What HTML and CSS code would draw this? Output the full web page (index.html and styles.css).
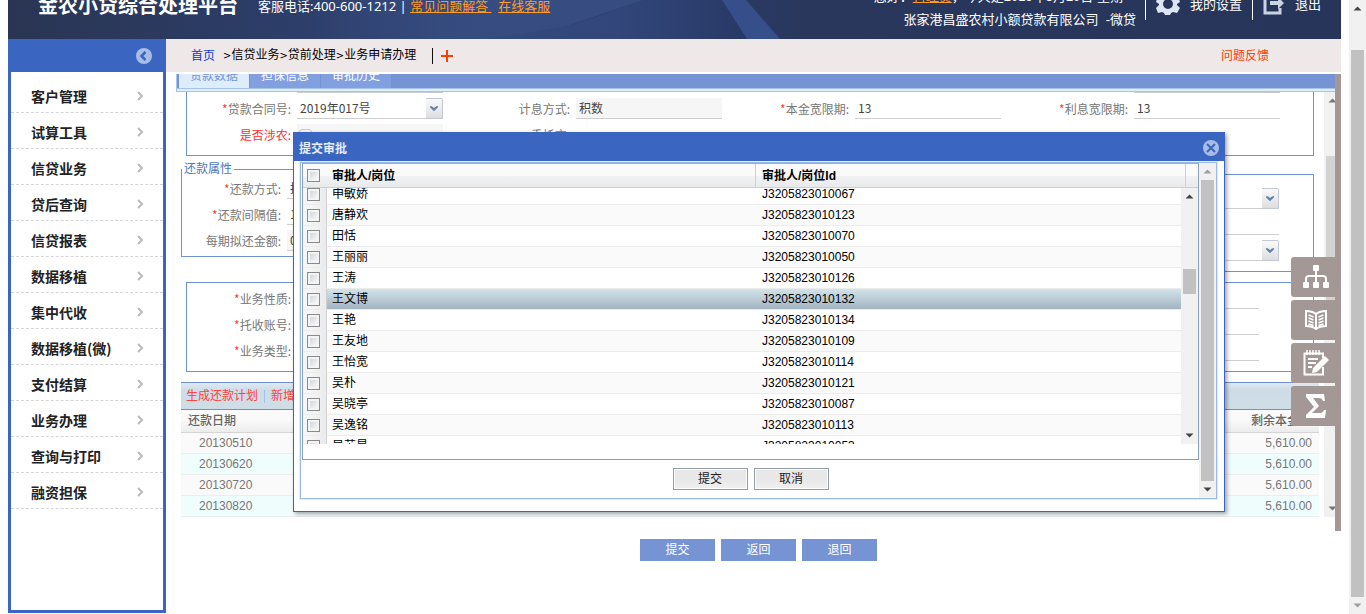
FILE: index.html
```html
<!DOCTYPE html>
<html lang="zh-CN">
<head>
<meta charset="utf-8">
<title>金农小贷综合处理平台</title>
<link rel="stylesheet" href="styles.css">
</head>
<body>
<svg class="defs" aria-hidden="true">
  <symbol id="chev" viewBox="0 0 8 10"><path d="M2 1l4 4-4 4" fill="none" stroke="#bbb" stroke-width="2"/></symbol>
  <symbol id="drop" viewBox="0 0 17 21"><path d="M4 8h2l2.500 2 2.500-2h2v1l-4.500 4.500L4 9z" fill="#5f83ad"/></symbol>
  <symbol id="up" viewBox="0 0 17 17"><path d="M8.500 6.500l4 4h-8z" fill="currentColor"/></symbol>
  <symbol id="down" viewBox="0 0 17 17"><path d="M8.500 10.500l4-4h-8z" fill="currentColor"/></symbol>
</svg>

<div class="app">
  <header class="banner">
    <svg class="banner-art" viewBox="0 0 1333 39" preserveAspectRatio="none" aria-hidden="true">
      <defs>
        <linearGradient id="sky"><stop offset="0" stop-color="#2a3553"/><stop offset=".2" stop-color="#2c3d68"/><stop offset=".38" stop-color="#34487a"/><stop offset=".52" stop-color="#2b3c69"/><stop offset=".6" stop-color="#29375c"/><stop offset="1" stop-color="#27355b"/></linearGradient>
        <linearGradient id="wing" x1="0" y1="0" x2="1" y2="0"><stop offset="0" stop-color="#34497e"/><stop offset=".5" stop-color="#32467b"/><stop offset="1" stop-color="#283965"/></linearGradient>
        <linearGradient id="glow"><stop offset="0" stop-color="#374d82" stop-opacity="0"/><stop offset=".6" stop-color="#374d82"/></linearGradient>
      </defs>
      <rect width="1333" height="39" fill="url(#sky)"/>
      <path d="M300 0h335L540 32 480 39H300z" fill="url(#glow)"/>
      <path d="M635 0h79l26 39H480l90-15z" fill="url(#wing)"/>
      <path d="M714 0h24l34 39h-33z" fill="#364f8b"/>
    </svg>
    <h1 class="brand">金农小贷综合处理平台</h1>
    <p class="hotline">客服电话:400-600-1212 | <a href="#">常见问题解答 </a>&nbsp; <a href="#">在线客服</a></p>
    <div class="account">
      <p>您好：<a href="#">管理员</a>，今天是2019年5月20日 星期一</p>
      <p>张家港昌盛农村小额贷款有限公司&nbsp; -微贷</p>
    </div>
    <a class="tool" href="#">
      <svg width="24" height="24" viewBox="0 0 24 24"><path fill="#dde5f3" fill-rule="evenodd" d="M9 1h6l1 4 2 1 4-1 2 6-3 2v1l3 3-3 5-4-1-2 1-1 2H9l-1-2-2-1-4 1-2-5 3-3v-1l-3-2 2-6 4 1 2-1zM12 8a5 5 0 1 0 0 10 5 5 0 0 0 0-10z"/></svg>
      <span>我的设置</span></a>
    <a class="tool tool-exit" href="#">
      <svg width="22" height="24" viewBox="0 0 22 24"><path fill="none" stroke="#cbd3e2" stroke-width="3" d="M16 2H2v20h15v-5"/><path fill="#cbd3e2" d="M7 10h8V6l6 6-6 6v-4H7z"/></svg>
      <span>退出</span></a>
  </header>

  <div class="workspace">
    <nav class="sidebar" aria-label="主菜单">
      <div class="sidebar-head"><button class="collapse" aria-label="收起菜单"><svg width="16" height="16" viewBox="0 0 16 16"><circle cx="8" cy="8" r="8" fill="#a9bce6"/><path d="M9.500 4L5.500 8l4 4" fill="none" stroke="#3a66c1" stroke-width="2.500"/></svg></button></div>
      <ul class="menu">
        <li><a href="#">客户管理<svg><use href="#chev"/></svg></a></li>
        <li><a href="#">试算工具<svg><use href="#chev"/></svg></a></li>
        <li><a href="#">信贷业务<svg><use href="#chev"/></svg></a></li>
        <li><a href="#">贷后查询<svg><use href="#chev"/></svg></a></li>
        <li><a href="#">信贷报表<svg><use href="#chev"/></svg></a></li>
        <li><a href="#">数据移植<svg><use href="#chev"/></svg></a></li>
        <li><a href="#">集中代收<svg><use href="#chev"/></svg></a></li>
        <li><a href="#">数据移植(微)<svg><use href="#chev"/></svg></a></li>
        <li><a href="#">支付结算<svg><use href="#chev"/></svg></a></li>
        <li><a href="#">业务办理<svg><use href="#chev"/></svg></a></li>
        <li><a href="#">查询与打印<svg><use href="#chev"/></svg></a></li>
        <li><a href="#">融资担保<svg><use href="#chev"/></svg></a></li>
      </ul>
    </nav>

    <main class="main">
      <div class="crumbs">
        <a href="#">首页</a><span><small>&gt;</small>信贷业务<small>&gt;</small>贷前处理<small>&gt;</small>业务申请办理</span>
        <i class="crumb-bar"></i>
        <button class="add" aria-label="添加"><svg width="12" height="12" viewBox="0 0 12 12"><path d="M6 0v12M0 6h12" stroke="#ff3d00" stroke-width="2"/></svg></button>
        <a class="feedback" href="#">问题反馈</a>
      </div>

      <div class="frame">
        <div class="pane">
          <div class="tabs" role="tablist">
            <button class="tab tab-on" role="tab">贷款数据</button>
            <button class="tab" role="tab">担保信息</button>
            <button class="tab" role="tab">审批历史</button>
          </div>
          <div class="tab-strip"></div>
          <div class="scroller">
            <div class="form">
              <fieldset class="box box-top">
                <div class="grid4">
                  <div class="field"><span class="combo"><select aria-label="客户"><option></option></select><svg><use href="#drop"/></svg></span></div>
                  <div class="field"></div><div class="field"></div>
                  <div class="field"><span class="combo"><select aria-label="利率"><option></option></select><svg><use href="#drop"/></svg></span></div>
                  <div class="field"><label for="f1"><b>*</b>贷款合同号:</label><span class="combo"><select id="f1"><option>2019年017号</option></select><svg><use href="#drop"/></svg></span></div>
                  <div class="field"><label for="f2">计息方式:</label><input id="f2" class="locked" value="积数" readonly></div>
                  <div class="field"><label for="f3"><b>*</b>本金宽限期:</label><input id="f3" value="13"></div>
                  <div class="field"><label for="f4"><b>*</b>利息宽限期:</label><input id="f4" value="13"></div>
                  <div class="field"><label class="red" for="f5">是否涉农:</label><span class="check-cell"><input id="f5" type="checkbox" checked disabled></span></div>
                  <div class="field"><label for="f6">委托方:</label><input id="f6" class="plain"></div>
                </div>
              </fieldset>

              <div class="pair">
                <fieldset class="box box-repay">
                  <legend>还款属性</legend>
                  <div class="field"><label for="g1"><b>*</b>还款方式:</label><input id="g1" value="按月还息到期还本"></div>
                  <div class="field"><label for="g2"><b>*</b>还款间隔值:</label><input id="g2" value="1"></div>
                  <div class="field"><label for="g3">每期拟还金额:</label><input id="g3" class="locked" value="0.00"></div>
                </fieldset>
                <fieldset class="box box-rate">
                  <div class="field"><span class="combo"><select aria-label="利率种类"><option></option></select><svg><use href="#drop"/></svg></span></div>
                  <div class="field"><input aria-label="利率值"></div>
                  <div class="field"><span class="combo"><select aria-label="利率周期"><option></option></select><svg><use href="#drop"/></svg></span></div>
                </fieldset>
              </div>

              <fieldset class="box box-biz">
                <div class="field"><label for="h1"><b>*</b>业务性质:</label><input id="h1"></div>
                <div class="field"><label for="h2"><b>*</b>托收账号:</label><input id="h2"></div>
                <div class="field"><label for="h3"><b>*</b>业务类型:</label><input id="h3"></div>
              </fieldset>

              <div class="plan-bar"><a href="#">生成还款计划</a><i></i><a href="#">新增</a></div>
              <table class="plan">
                <thead><tr><th>还款日期</th><th class="num">剩余本金</th></tr></thead>
                <tbody>
                  <tr><td>20130510</td><td class="num">5,610.00</td></tr>
                  <tr><td>20130620</td><td class="num">5,610.00</td></tr>
                  <tr><td>20130720</td><td class="num">5,610.00</td></tr>
                  <tr><td>20130820</td><td class="num">5,610.00</td></tr>
                </tbody>
              </table>
            </div>
            <div class="bar bar-form" aria-hidden="true"><svg><use href="#up"/></svg><div class="track"><i class="thumb"></i></div><svg><use href="#down"/></svg></div>
          </div>
        </div>
      </div>

      <div class="actions"><button>提交</button><button>返回</button><button>退回</button></div>
    </main>
  </div>

  <aside class="dock">
    <button aria-label="组织"><svg width="26" height="24" viewBox="0 0 26 24" fill="#fff"><rect x="10" y="0" width="6" height="6" rx="1"/><path d="M13 5v12M3 18v-4q0-3 3-3h14q3 0 3 3v4" fill="none" stroke="#fff" stroke-width="2"/><rect x="0" y="17" width="6" height="6" rx="1"/><rect x="10" y="17" width="6" height="6" rx="1"/><rect x="20" y="17" width="6" height="6" rx="1"/></svg></button>
    <button aria-label="手册"><svg width="22" height="20" viewBox="0 0 22 20" fill="none" stroke="#fff"><path d="M1 1q6 0 10 3 4-3 10-3v15q-6 0-10 3-4-3-10-3z" stroke-width="2"/><path d="M11 4v14" stroke-width="2"/><path d="M3.500 5l5 2M3.500 8l5 2M3.500 11l5 2M3.500 14l5 1.500M18.500 5l-5 2M18.500 8l-5 2M18.500 11l-5 2M18.500 14l-5 1.500" stroke-width="1.500"/></svg></button>
    <button aria-label="记事"><svg width="26" height="26" viewBox="0 0 26 26" fill="none" stroke="#fff"><path d="M20 17v7.500H1.500v-21H20V8" stroke-width="2"/><path d="M4 0v5M7 0v5M10 0v5M13 0v5M16 0v5" stroke-width="1.500"/><path d="M5 9h10M5 13h8M5 17h4" stroke-width="2"/><path d="M9 23l1-5L22 6l4 4-12 12z" fill="#fff" stroke="none"/></svg></button>
    <button aria-label="汇总"><svg width="20" height="24" viewBox="0 0 20 24"><path d="M0 0h18l1 7h-2q-1-3-4-3H7l6 8-7 7h8q3 0 4-3h2l-1 8H0v-3l8-8-8-10z" fill="#fff"/></svg></button>
  </aside>

  <section class="dialog" role="dialog" aria-labelledby="dlg-title">
    <div class="dialog-head"><h2 id="dlg-title">提交审批</h2><button aria-label="关闭"><svg width="16" height="16" viewBox="0 0 16 16"><circle cx="8" cy="8" r="8" fill="#a9bce6"/><path d="M4 4l8 8M12 4l-8 8" stroke="#3a66c1" stroke-width="2"/></svg></button></div>
    <div class="dialog-body">
      <div class="dialog-content">
        <div class="list">
          <div class="list-head"><span class="c-check"><input type="checkbox" aria-label="全选"></span><span class="c-name">审批人/岗位</span><span class="c-id">审批人/岗位Id</span></div>
          <div class="list-view">
            <div class="rows-clip">
            <table class="rows">
              <colgroup><col class="w-check"><col class="w-name"><col></colgroup>
              <tbody>
              <tr><td><input type="checkbox" aria-label="申敏娇"></td><td>申敏娇</td><td>J3205823010067</td></tr>
              <tr><td><input type="checkbox" aria-label="唐静欢"></td><td>唐静欢</td><td>J3205823010123</td></tr>
              <tr><td><input type="checkbox" aria-label="田恬"></td><td>田恬</td><td>J3205823010070</td></tr>
              <tr><td><input type="checkbox" aria-label="王丽丽"></td><td>王丽丽</td><td>J3205823010050</td></tr>
              <tr><td><input type="checkbox" aria-label="王涛"></td><td>王涛</td><td>J3205823010126</td></tr>
              <tr class="hover"><td><input type="checkbox" aria-label="王文博"></td><td>王文博</td><td>J3205823010132</td></tr>
              <tr><td><input type="checkbox" aria-label="王艳"></td><td>王艳</td><td>J3205823010134</td></tr>
              <tr><td><input type="checkbox" aria-label="王友地"></td><td>王友地</td><td>J3205823010109</td></tr>
              <tr><td><input type="checkbox" aria-label="王怡宽"></td><td>王怡宽</td><td>J3205823010114</td></tr>
              <tr><td><input type="checkbox" aria-label="吴朴"></td><td>吴朴</td><td>J3205823010121</td></tr>
              <tr><td><input type="checkbox" aria-label="吴晓亭"></td><td>吴晓亭</td><td>J3205823010087</td></tr>
              <tr><td><input type="checkbox" aria-label="吴逸铭"></td><td>吴逸铭</td><td>J3205823010113</td></tr>
              <tr><td><input type="checkbox" aria-label="吴苏昊"></td><td>吴苏昊</td><td>J3205823010053</td></tr>
              </tbody>
            </table>
            </div>
            <div class="bar bar-list" aria-hidden="true"><svg><use href="#up"/></svg><div class="track"><i class="thumb"></i></div><svg><use href="#down"/></svg></div>
          </div>
        </div>
        <div class="dialog-actions"><button>提交</button><button>取消</button></div>
      </div>
      <div class="bar bar-dialog" aria-hidden="true"><svg class="dim"><use href="#up"/></svg><div class="track"><i class="thumb"></i></div><svg><use href="#down"/></svg></div>
    </div>
  </section>
</div>

<div class="bar bar-page" aria-hidden="true"><svg><use href="#up"/></svg><div class="track"><i class="thumb"></i></div><svg class="dim"><use href="#down"/></svg></div>
</body>
</html>
```
FILE: styles.css
```css
* { box-sizing: border-box; }
body {
  margin: 0;
  height: 100vh;
  overflow: hidden;
  display: flex;
  gap: 8px;
  background: #fff;
  color: #222;
  font: 12px/16px "Liberation Sans", "Noto Sans CJK SC", sans-serif;
}
p, h1, h2, ul { margin: 0; padding: 0; }
button { border: 0; padding: 0; background: none; font: inherit; color: inherit; }
input, select { font: inherit; color: inherit; margin: 0; border-radius: 0; min-width: 0; }
svg { display: block; flex: none; }
.defs { position: absolute; width: 0; height: 0; }

.app { position: relative; flex: 1; min-width: 0; display: flex; flex-direction: column; padding: 0 0 1px 8px; }

/* banner */
.banner {
  position: relative;
  height: 39px;
  overflow: hidden;
  display: flex;
  align-items: flex-end;
  padding: 0 20px 0 30px;
  color: #fff;
  font-size: 13px;
  background: #2a3860;
}
.banner > * { position: relative; }
.banner > .banner-art { position: absolute; inset: 0; width: 100%; height: 100%; }
.brand { font: bold 20px/24px "Noto Sans CJK SC", sans-serif; padding-bottom: 22px; }
.hotline { font: 13px/18px "Noto Sans", "Noto Sans CJK SC", sans-serif; padding: 0 0 24px 20px; white-space: nowrap; }
.hotline a, .account a { color: #ff9c1a; }
.account { margin-left: auto; padding: 0 9px 10px; text-align: right; white-space: nowrap; line-height: 18px; }
.account p:first-child { padding-bottom: 5px; }
.tool { display: flex; align-items: flex-end; gap: 10px; height: 39px; margin-bottom: 19px; padding: 0 10px 3px; color: #fff; text-decoration: none; border-left: 1px solid #fff; }
.tool span { line-height: 20px; padding-bottom: 2px; }
.tool svg { margin-bottom: 2px; }
.tool-exit { padding-right: 0; }

/* sidebar */
.workspace { flex: 1; display: flex; min-height: 0; }
.sidebar { width: 158px; border: solid #3a66c1; border-width: 0 3px 3px; }
.sidebar-head { height: 33px; background: #3a66c1; display: flex; align-items: center; justify-content: flex-end; padding-right: 11px; }
.menu { list-style: none; padding-top: 5px; }
.menu a {
  display: flex; align-items: center; justify-content: space-between;
  height: 36px; padding: 2px 19px 0 20px;
  border-bottom: 1px dashed #d5d5d5;
  color: #222; text-decoration: none;
  font: bold 14px/20px "Noto Sans CJK SC", sans-serif;
}
.menu svg { width: 8px; height: 10px; }

/* breadcrumbs */
.main { flex: 1; min-width: 0; }
.crumbs { height: 33px; background: #efe8e8; display: flex; align-items: center; padding: 0 72px 0 25px; color: #000; }
.crumbs a { color: #0a3cc8; text-decoration: none; margin-right: 8px; }
.crumbs small { font: 10px/16px "DejaVu Sans", sans-serif; }
.crumb-bar { width: 1px; height: 16px; background: #111; margin: 0 8px 0 16px; }
.crumbs .feedback { margin: 0 0 0 auto; color: #ff3d00; }

/* form frame */
.frame { margin: 2px 0 0 10px; padding-bottom: 14px; border-right: 6px solid #a39895; }
.tabs { height: 14px; overflow: hidden; display: flex; align-items: flex-end; gap: 1px; padding-left: 2px; background: #7693d4; border-left: 1px solid #a9c5ee; }
.tab { height: 24px; line-height: 24px; padding: 0 11px; background: #829fe0; color: #fff; flex: none; }
.tab-on { background: #deedfc; color: #7693d4; }
.tab-strip { height: 4px; border: solid #a4c4ee; border-width: 1px 0 1px 1px; background: #e0efff; }
.scroller { display: flex; justify-content: space-between; overflow: hidden; color: #777; }
.form { flex: 1; min-width: 0; padding: 0 5px; }
.box { margin: 0 5px; padding: 0; border: 1px solid #6f90d2; min-width: 0; }
.field { display: flex; gap: 6px; height: 21px; margin-bottom: 5px; font-family: "Noto Sans CJK SC", sans-serif; }
.field label { width: 104px; flex: none; text-align: right; line-height: 22px; white-space: nowrap; }
.field b { color: #ff3b30; font-weight: normal; }
.field .red { color: #ff3030; }
.field input, .field select { flex: 1; width: 100%; height: 21px; padding: 0 3px 1px; border: 0; border-bottom: 1px solid #cfcfcf; background: #fff; color: #444; outline: 0; appearance: none; }
.field .locked { background: #f6f6f6; }
.field .plain { border: 0; }
.combo { flex: 1; display: flex; min-width: 0; }
.combo svg { width: 17px; height: 21px; border: solid #c5c9d6; border-width: 1px 1px 1px 0; border-radius: 0 2px 0 0; background: linear-gradient(#fafafa, #ddd); }
.check-cell { flex: 1; background: #f6f6f6; padding: 5px 2px; }
.field .check-cell input { display: block; width: 13px; height: 13px; border: 1px solid #ccc; border-radius: 3px; background: #f4f4f4; }

.box-top { border-top: 0; padding: 0 10px 5px 0; margin: -20px 5px 0; }
.grid4 { display: grid; grid-template-columns: repeat(4, 1fr); }
.grid4 .field { padding-right: 23px; }
.grid4 .combo:first-child { margin-left: 110px; }

.pair { display: grid; grid-template-columns: 1fr 1fr; align-items: start; padding-top: 5px; }
.pair .box { margin: 0; }
.box-repay legend { margin-left: 0; padding: 0 2px; line-height: 16px; color: #4c7ab8; }
.box-repay { padding-top: 1px; }
.box-repay label { width: 99px; }
.pair .box-rate { margin: 13px 5px 0 0; padding: 13px 34px 5px 110px; }
.box-biz { margin-top: 10px; padding: 5px 54px 5px 0; }

.plan-bar { display: flex; align-items: center; gap: 6px; height: 28px; margin-top: 10px; padding: 0 5px; border: solid #6f90d2; border-width: 1px 0; background: linear-gradient(#dfe9f2, #cddce6 30%, #cfdee6); }
.plan-bar a { color: #ff4242; text-decoration: none; }
.plan-bar i { width: 1px; height: 13px; background: #9cc4f0; }
.plan { width: 100%; border-collapse: separate; border-spacing: 0; table-layout: fixed; }
.plan th { height: 23px; padding: 0 7px; text-align: left; color: #666; font-weight: 500; background: linear-gradient(#fafafa 45%, #ececec); border-bottom: 1px solid #d5d5d5; }
.plan td { height: 21px; padding: 0 18px; background: #fafafa; border-bottom: 1px solid #ededed; }
.plan tr:nth-child(even) td { background: #f0fdfd; }
.plan .num { text-align: right; padding-right: 7px; }
.plan th.num { padding-right: 20px; }

/* scrollbars */
.bar { width: 17px; flex: none; display: flex; flex-direction: column; background: #f1f1f1; color: #444; }
.bar svg { width: 17px; height: 17px; }
.bar .dim { color: #a0a0a0; }
.track { flex: 1; display: flex; justify-content: center; min-height: 0; }
.thumb { width: 13px; background: #c1c1c1; }
.bar-page .thumb { margin: 33px 0 0; }
.bar-form { margin-right: -6px; color: #777; }
.bar-form .thumb { height: 144px; margin-top: 47px; background: #d3d3d3; }
.bar-list .thumb { height: 25px; margin-top: 64px; }

.actions { display: flex; justify-content: center; gap: 6px; padding: 8px 0 0 10px; }
.actions button { width: 75px; height: 22px; background: #7693d4; color: #fff; }

/* floating tools at the right edge */
.dock { position: absolute; right: 6px; top: 257px; display: grid; gap: 3px; }
.dock button { width: 44px; height: 40px; display: grid; place-items: center; padding-left: 6px; border-radius: 3px 0 0 3px; background: #a39895; }

/* dialog */
.dialog { position: absolute; left: 293px; right: 116px; top: 132px; border: 1px solid #3a66c1; background: #fff; box-shadow: 2px 2px 4px rgba(0, 0, 0, .35); padding: 0 7px 12px 6px; color: #000; }
.dialog-head { display: flex; justify-content: space-between; align-items: center; height: 28px; margin: 0 -7px 1px -6px; padding: 2px 5px 0; background: #3a66c1; }
.dialog-head h2 { font: bold 12px/18px "Noto Sans CJK SC", sans-serif; color: #e6edfb; }
.dialog-body { display: flex; border: 1px solid #99bbe8; box-shadow: 0 0 0 1px #e0ecfa; }
.dialog-content { flex: 1; min-width: 0; padding-left: 1px; }
.list { border: 1px solid #8b9fb5; border-top-color: #7fb4e4; padding-bottom: 15px; }
.list-head { display: flex; height: 24px; border-bottom: 1px solid #cfcfcf; background: linear-gradient(#fafafa 50%, #f1f2f4 50%, #e8eaec); font: bold 12px/22px "Liberation Sans", "Noto Sans CJK SC", sans-serif; }
.list-head span { border-right: 1px solid #d0d0d0; padding: 1px 6px 0 5px; }
.list-head .c-check { width: 24px; padding: 5px 4px; border: 0; }
.c-name { width: 429px; }
.list-head .c-id { flex: 1; margin-right: 12px; padding-left: 6px; }
.list-view { display: flex; height: 256px; }
.rows-clip { flex: 1; overflow: hidden; }
.rows { width: 100%; margin-top: -4px; border-collapse: separate; border-spacing: 0; table-layout: fixed; }
.w-check { width: 24px; }
.w-name { width: 429px; }
.rows td { height: 21px; padding: 0 6px 1px; line-height: 18px; border-bottom: 1px solid #ececec; white-space: nowrap; }
.rows tr:nth-child(even) td { background: #fafafa; }
.rows td:first-child { padding: 0 4px; border-right: 1px solid #d0d0d0; }
.rows tr td:first-child { background: linear-gradient(90deg, #f6f6f6 30%, #e9eaec); }
.rows .hover td + td { background: linear-gradient(#d3e3ea, #a3b4c1); }
.rows td + td { padding-left: 5px; }
.rows td + td + td { padding-left: 6px; }
.list input { appearance: none; display: block; width: 13px; height: 13px; border: 1px solid #8a8a8a; background: linear-gradient(135deg, #c9cfd6, #fff); box-shadow: inset 0 0 0 2px #f4f4f4; }
.dialog-actions { display: flex; justify-content: center; gap: 6px; padding: 8px 0; }
.dialog-actions button { width: 75px; height: 22px; border: 1px solid #929ca8; background: linear-gradient(#e8e8e8 50%, #f0f0f0); box-shadow: inset 0 0 0 1px #fff; color: #222; }
```
